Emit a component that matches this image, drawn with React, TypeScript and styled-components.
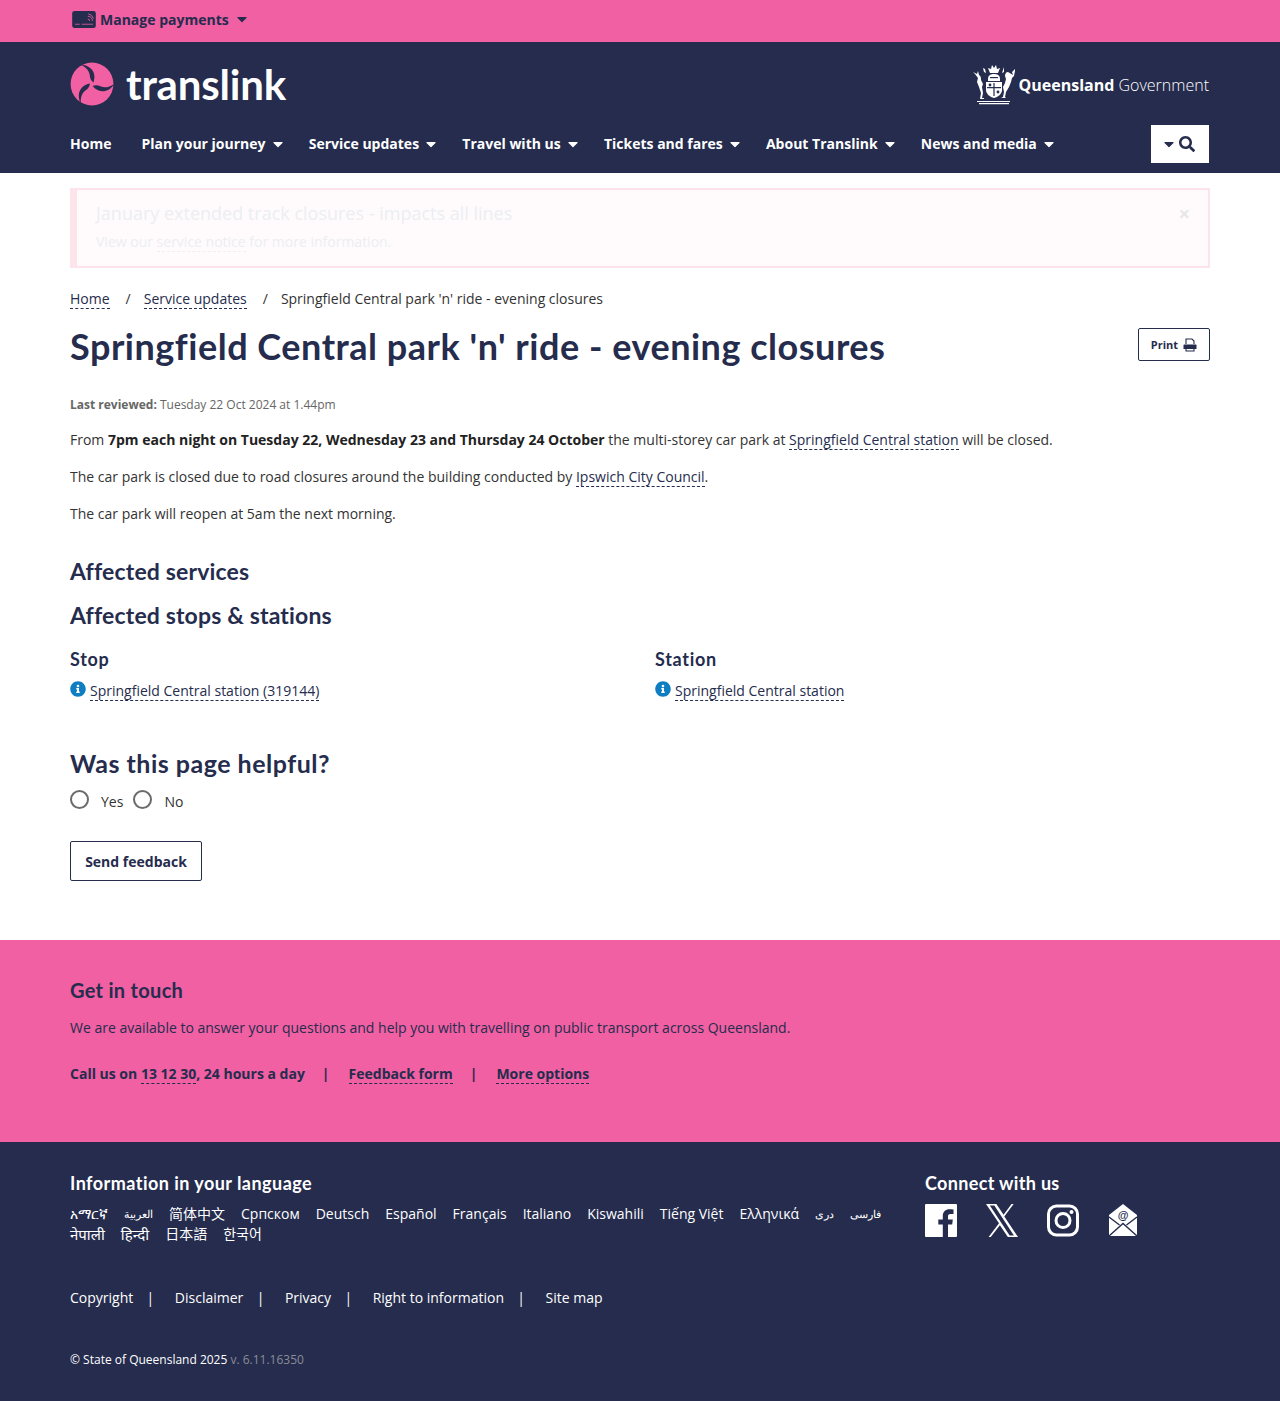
import React from 'react'
import styled, { createGlobalStyle } from 'styled-components'
import { FaCaretDown, FaInfoCircle, FaSearch } from 'react-icons/fa'

const navy = '#252c4d'
const pink = '#f060a3'
const bodyFont = `"Open Sans", "Noto Sans", "Noto Sans CJK SC", sans-serif`
const headFont = `Lato, "Noto Sans", sans-serif`

const GlobalStyle = createGlobalStyle`
  html, body {
    margin: 0;
    padding: 0;
    background: #fff;
    color: #333;
    font-family: ${bodyFont};
    font-size: 14px;
    line-height: 21px;
  }
  * { box-sizing: border-box; }
  h1, h2, h3, p { margin: 0; }
`

const navItems = [
  { label: 'Home', caret: false },
  { label: 'Plan your journey', caret: true },
  { label: 'Service updates', caret: true },
  { label: 'Travel with us', caret: true },
  { label: 'Tickets and fares', caret: true },
  { label: 'About Translink', caret: true },
  { label: 'News and media', caret: true },
]

const languages = [
  { label: 'አማርኛ', size: 14 },
  { label: 'العربية', size: 11 },
  { label: '简体中文', size: 14 },
  { label: 'Српском', size: 14 },
  { label: 'Deutsch', size: 14 },
  { label: 'Español', size: 14 },
  { label: 'Français', size: 14 },
  { label: 'Italiano', size: 14 },
  { label: 'Kiswahili', size: 14 },
  { label: 'Tiếng Việt', size: 14 },
  { label: 'Ελληνικά', size: 14 },
  { label: 'دری', size: 11 },
  { label: 'فارسی', size: 11 },
  { label: 'नेपाली', size: 15 },
  { label: 'हिन्दी', size: 15 },
  { label: '日本語', size: 14 },
  { label: '한국어', size: 14 },
]

const legalLinks = ['Copyright', 'Disclaimer', 'Privacy', 'Right to information', 'Site map']

const CardIcon = () => (
  <svg width="24" height="17" viewBox="0 0 25 18">
    <rect x="0" y="0" width="25" height="18" rx="2.5" fill={navy} />
    <rect x="3" y="13.5" width="5" height="1" fill={pink} opacity="0.8" />
    <rect x="10" y="13.5" width="12" height="1" fill={pink} opacity="0.8" />
    <g fill="none" stroke={pink} strokeWidth="0.9">
      <path d="M16.5 8.5a2 2 0 0 1 2 2" />
      <path d="M16.5 5.5a5 5 0 0 1 5 5" />
      <path d="M17 3a7 7 0 0 1 5.5 5" />
    </g>
  </svg>
)

const blade = 'M-11.5 -19.5C-3.5 -19 5.5 -13.5 1.5 -1.5C-0.5 -3 -2 -5 -2.2 -8.5C-2.5 -13 -6 -17 -11.5 -19.5Z'

const TriskeleLogo = () => (
  <svg width="44" height="44" viewBox="-22 -22 44 44">
    <circle r="21.4" fill={pink} />
    {[0, 120, 240].map((r) => (
      <path key={r} d={blade} fill={navy} transform={`rotate(${r})`} />
    ))}
  </svg>
)

// rough shape of the coat of arms, it only reads at this small size
const CoatOfArms = () => (
  <svg width="44" height="42" viewBox="0 0 44 42" fill="#fff">
    <path d="M1 9l4 2 1-3 1 4c2 1 2 3 2 5l2 4-1 3 1 6-1 5h2v1H8l1-6-2-6-2-5 1-4-3-4z" />
    <path d="M43 6l-3 3 1 3-5-3c-2 0-3 2-3 4l1 3-1 4-2 4 1 5-1 5-2 1h5l-1-1 1-5 3-5 2-5 1-4 2-2 1-5z" />
    <path d="M14 19h16v8c0 4-4 7-8 8-4-1-8-4-8-8z" />
    <path d="M21.4 20h1.2v13h-1.2zM15 24h14v1.2H15z" fill={navy} />
    <circle cx="18" cy="22" r="1.4" fill={navy} />
    <circle cx="26" cy="29" r="1.4" fill={navy} />
    <path d="M16 16c0-4 3-5 6-5s6 1 6 5v2H16z" />
    <path d="M18 14h8v1.2h-8z" fill={navy} />
    <path d="M20 2l2 3 2-3 1 4 3-1-2 5H18l-2-5 3 1z" />
    <path d="M11 5l2 1 1 4-2-1zM32 4l-1 3-1 3 2-1z" />
    <path d="M5 38h33v1H5zM7 40h30v1.2H7z" />
  </svg>
)

const PrintIcon = () => (
  <svg width="14" height="14" viewBox="0 0 14 14">
    <path d="M3 6V1h6l2 2v3M3 11v2h8v-2" fill="none" stroke={navy} strokeWidth="1.1" />
    <path d="M1.5 6.5h11c.6 0 1 .4 1 1V11H.5V7.500c0-.6.4-1 1-1z" fill={navy} />
  </svg>
)

const FacebookIcon = () => (
  <svg width="32" height="33" viewBox="0 0 32 33">
    <path
      d="M1 0h30a1 1 0 0 1 1 1v31a1 1 0 0 1-1 1h-8V20.500h4.200l.6-5H23v-3.200c0-1.500.4-2.400 2.500-2.400H28.500V5.400c-.6-.1-2.200-.2-4-.2-4 0-6.700 2.400-6.700 6.800v3.500h-4.500v5h4.500V33H1a1 1 0 0 1-1-1V1a1 1 0 0 1 1-1z"
      fill="#fff"
    />
  </svg>
)

const XIcon = () => (
  <svg width="32" height="33" viewBox="1.25 2.25 21.3 19.5" preserveAspectRatio="none">
    <path
      d="M18.244 2.25h1.400l-6.200 7.400 9.100 12.100H15.800l-5.300-6.900-6.100 6.900H3l6.900-8.100L1.250 2.250h6.900l4.800 6.300zM17 20.800h2.800L6.800 3.200H3.800z"
      fill="#fff"
    />
  </svg>
)

const InstagramIcon = () => (
  <svg width="32" height="33" viewBox="0 0 32 33" fill="none" stroke="#fff">
    <rect x="1.500" y="2" width="29" height="29" rx="8" strokeWidth="3" />
    <circle cx="16" cy="16.500" r="7" strokeWidth="3" />
    <circle cx="24.500" cy="8" r="2" fill="#fff" stroke="none" />
  </svg>
)

const MailIcon = () => (
  <svg width="30" height="33" viewBox="0 0 30 33">
    <path d="M15 0L29 11V32H1V11Z" fill="#fff" />
    <path d="M1 13L11.500 21M29 13L18.500 21M1 32L15 19.500L29 32" fill="none" stroke={navy} strokeWidth="1.400" />
    <text x="15" y="15" textAnchor="middle" fontSize="11" fontWeight="700" fill={navy} fontFamily="Liberation Sans, sans-serif">@</text>
  </svg>
)

export default function App() {
  return (
    <>
      <GlobalStyle />
      <TopBar>
        <Wrap>
          <ManagePayments>
            <CardIcon />
            Manage payments
            <FaCaretDown size={16} />
          </ManagePayments>
        </Wrap>
      </TopBar>

      <Header>
        <Wrap>
          <BrandRow>
            <Brand>
              <TriskeleLogo />
              <Wordmark>translink</Wordmark>
            </Brand>
            <GovBrand>
              <CoatOfArms />
              <GovName>
                <b>Queensland</b> Government
              </GovName>
            </GovBrand>
          </BrandRow>
          <NavRow>
            <Nav>
              {navItems.map((item) => (
                <NavItem key={item.label}>
                  {item.label}
                  {item.caret && <FaCaretDown size={16} />}
                </NavItem>
              ))}
            </Nav>
            <SearchButton>
              <FaCaretDown size={16} />
              <FaSearch size={16} />
            </SearchButton>
          </NavRow>
        </Wrap>
      </Header>

      <Main>
        <Wrap>
          <Alert>
            <AlertTitle>January extended track closures - impacts all lines</AlertTitle>
            <AlertText>
              View our <DashedLink>service notice</DashedLink> for more information.
            </AlertText>
            <AlertClose>×</AlertClose>
          </Alert>

          <Breadcrumb>
            <NavyLink>Home</NavyLink>
            <Slash>/</Slash>
            <NavyLink>Service updates</NavyLink>
            <Slash>/</Slash>
            <span>Springfield Central park 'n' ride - evening closures</span>
          </Breadcrumb>

          <TitleRow>
            <PageTitle>Springfield Central park 'n' ride - evening closures</PageTitle>
            <PrintButton>
              Print <PrintIcon />
            </PrintButton>
          </TitleRow>

          <Reviewed>
            <b>Last reviewed:</b> Tuesday 22 Oct 2024 at 1.44pm
          </Reviewed>

          <Para>
            From <b>7pm each night on Tuesday 22, Wednesday 23 and Thursday 24 October</b> the multi-storey car park at{' '}
            <NavyLink>Springfield Central station</NavyLink> will be closed.
          </Para>
          <Para>
            The car park is closed due to road closures around the building conducted by{' '}
            <NavyLink>Ipswich City Council</NavyLink>.
          </Para>
          <Para>The car park will reopen at 5am the next morning.</Para>

          <SectionTitle>Affected services</SectionTitle>
          <SectionTitleTight>Affected stops &amp; stations</SectionTitleTight>

          <StopsGrid>
            <div>
              <ColumnTitle>Stop</ColumnTitle>
              <StopLine>
                <InfoIcon size={16} />
                <span>
                  <NavyLink>Springfield Central station (319144)</NavyLink>
                </span>
              </StopLine>
            </div>
            <div>
              <ColumnTitle>Station</ColumnTitle>
              <StopLine>
                <InfoIcon size={16} />
                <span>
                  <NavyLink>Springfield Central station</NavyLink>
                </span>
              </StopLine>
            </div>
          </StopsGrid>

          <HelpfulTitle>Was this page helpful?</HelpfulTitle>
          <RadioRow>
            <Radio type="radio" name="helpful" />
            <RadioLabel>Yes</RadioLabel>
            <Radio type="radio" name="helpful" />
            <RadioLabel>No</RadioLabel>
          </RadioRow>
          <FeedbackButton>Send feedback</FeedbackButton>
        </Wrap>
      </Main>

      <Contact>
        <Wrap>
          <ContactTitle>Get in touch</ContactTitle>
          <ContactText>We are available to answer your questions and help you with travelling on public transport across Queensland.</ContactText>
          <ContactLinks>
            Call us on <DashedLink>13 12 30</DashedLink>, 24 hours a day
            <Pipe>|</Pipe>
            <DashedLink>Feedback form</DashedLink>
            <Pipe>|</Pipe>
            <DashedLink>More options</DashedLink>
          </ContactLinks>
        </Wrap>
      </Contact>

      <Footer>
        <Wrap>
          <FooterTop>
            <LanguageColumn>
              <FooterTitle>Information in your language</FooterTitle>
              <Languages>
                {languages.map((l) => (
                  <Language key={l.label} $size={l.size}>
                    {l.label}
                  </Language>
                ))}
              </Languages>
            </LanguageColumn>
            <div>
              <ConnectTitle>Connect with us</ConnectTitle>
              <Social>
                <FacebookIcon />
                <XIcon />
                <InstagramIcon />
                <MailIcon />
              </Social>
            </div>
          </FooterTop>
          <LegalRow>
            {legalLinks.map((l, i) => (
              <LegalItem key={l} $last={i === legalLinks.length - 1}>
                {l}
              </LegalItem>
            ))}
          </LegalRow>
          <Copyright>
            © State of Queensland 2025 <Version>v. 6.11.16350</Version>
          </Copyright>
        </Wrap>
      </Footer>
    </>
  )
}

const Wrap = styled.div`
  width: 1140px;
  margin: 0 auto;
`

const TopBar = styled.div`
  height: 42px;
  background: ${pink};
`

const ManagePayments = styled.div`
  display: flex;
  align-items: center;
  height: 38px;
  padding-left: 2px;
  font-weight: 700;
  color: ${navy};
  svg:first-child {
    margin-right: 4px;
  }
  svg:last-child {
    margin-left: 5px;
  }
`

const Header = styled.header`
  height: 131px;
  background: ${navy};
  color: #fff;
`

const BrandRow = styled.div`
  display: flex;
  justify-content: space-between;
  align-items: center;
  height: 83px;
`

const Brand = styled.div`
  display: flex;
  align-items: center;
  gap: 12px;
`

const Wordmark = styled.span`
  font-family: ${headFont};
  font-weight: 700;
  font-size: 42px;
  line-height: 44px;
  letter-spacing: -0.2px;
`

const GovBrand = styled.div`
  display: flex;
  align-items: center;
  gap: 3px;
  margin-right: 1px;
`

const GovName = styled.span`
  padding-top: 4px;
  font-size: 16px;
  font-weight: 300;
  font-stretch: 96%;
  b {
    font-weight: 700;
    font-stretch: 97%;
  }
`

const NavRow = styled.div`
  display: flex;
  justify-content: space-between;
  align-items: flex-start;
`

const Nav = styled.nav`
  display: flex;
  gap: 30px;
  padding-top: 8px;
`

const NavItem = styled.div`
  display: flex;
  align-items: center;
  gap: 4px;
  font-weight: 700;
  color: #fff;
  height: 21px;
  svg {
    margin-right: -6.8px;
  }
`

const SearchButton = styled.div`
  display: flex;
  align-items: center;
  justify-content: center;
  gap: 2px;
  width: 58px;
  height: 38px;
  margin-right: 1px;
  padding-right: 4px;
  background: #fff;
  color: ${navy};
`

const Main = styled.main`
  height: 767px;
  padding-top: 15px;
`

const Alert = styled.div`
  position: relative;
  height: 80px;
  padding: 11px 20px 0 19px;
  background: #fffbfc;
  border: 2px solid #fde3ea;
  border-left-width: 7px;
`

const AlertTitle = styled.div`
  font-size: 18px;
  line-height: 24px;
  color: #eceef2;
`

const AlertText = styled.div`
  margin-top: 6px;
  color: #eceef2;
`

const AlertClose = styled.span`
  position: absolute;
  top: 12px;
  right: 18px;
  font-size: 20px;
  font-weight: 700;
  line-height: 24px;
  color: #e6e7ea;
`

const DashedLink = styled.span`
  border-bottom: 1px dashed currentColor;
`

const NavyLink = styled(DashedLink)`
  color: ${navy};
`

const Breadcrumb = styled.div`
  margin-top: 20px;
  height: 21px;
`

const Slash = styled.span`
  margin: 0 13px 0 16px;
`

const TitleRow = styled.div`
  display: flex;
  justify-content: space-between;
  align-items: flex-start;
  margin-top: 15px;
`

const PageTitle = styled.h1`
  font-family: ${headFont};
  font-weight: 700;
  font-size: 36px;
  line-height: 44px;
  letter-spacing: 0.52px;
  color: ${navy};
`

const PrintButton = styled.div`
  display: flex;
  align-items: center;
  gap: 5px;
  height: 33px;
  margin-top: 4px;
  padding: 0 12px;
  border: 1px solid ${navy};
  border-radius: 2px;
  font-size: 11px;
  font-weight: 700;
  color: ${navy};
`

const Reviewed = styled.div`
  margin-top: 28px;
  font-size: 12px;
  line-height: 18px;
  color: #666;
`

const Para = styled.p`
  margin-top: 16px;
  &:first-of-type {
    margin-top: 15px;
  }
  b {
    color: #222;
  }
`

const SectionTitle = styled.h2`
  margin-top: 32px;
  font-family: ${headFont};
  font-weight: 700;
  font-size: 23px;
  line-height: 30px;
  letter-spacing: 0.15px;
  color: ${navy};
`

const SectionTitleTight = styled(SectionTitle)`
  margin-top: 14px;
`

const StopsGrid = styled.div`
  display: grid;
  grid-template-columns: 585px 1fr;
  margin-top: 16px;
`

const ColumnTitle = styled.h3`
  font-family: ${headFont};
  font-weight: 700;
  font-size: 18px;
  line-height: 26px;
  letter-spacing: 0.7px;
  color: ${navy};
`

const StopLine = styled.div`
  display: flex;
  align-items: flex-start;
  gap: 4px;
  margin-top: 8px;
`

const InfoIcon = styled(FaInfoCircle)`
  color: #0f7dc2;
  margin-top: 1px;
`

const HelpfulTitle = styled.h2`
  margin-top: 46px;
  font-family: ${headFont};
  font-weight: 700;
  font-size: 25px;
  line-height: 32px;
  letter-spacing: 0.5px;
  color: ${navy};
`

const RadioRow = styled.div`
  display: flex;
  align-items: center;
  margin-top: 11px;
  height: 21px;
`

const Radio = styled.input`
  appearance: none;
  width: 19px;
  height: 19px;
  margin: 0 12px 3px 0;
  border: 2px solid #6b6b6b;
  border-radius: 50%;
  background: #fff;
`

const RadioLabel = styled.label`
  margin-right: 10px;
  padding-top: 2px;
`

const FeedbackButton = styled.div`
  display: flex;
  align-items: center;
  justify-content: center;
  width: 132px;
  height: 40px;
  margin-top: 30px;
  border: 1px solid ${navy};
  border-radius: 2px;
  font-weight: 700;
  color: ${navy};
`

const Contact = styled.section`
  height: 202px;
  padding-top: 35px;
  background: ${pink};
  color: ${navy};
`

const ContactTitle = styled.h2`
  font-family: ${headFont};
  font-weight: 700;
  font-size: 20px;
  line-height: 30px;
  letter-spacing: 0.3px;
`

const ContactText = styled.p`
  margin-top: 12px;
`

const ContactLinks = styled.div`
  margin-top: 25px;
  font-weight: 700;
`

const Pipe = styled.span`
  margin: 0 19px 0 17px;
`

const Footer = styled.footer`
  height: 259px;
  padding-top: 28px;
  background: ${navy};
  color: #fff;
`

const FooterTop = styled.div`
  display: flex;
`

const LanguageColumn = styled.div`
  width: 855px;
`

const FooterTitle = styled.h3`
  font-family: ${headFont};
  font-weight: 700;
  font-size: 18px;
  line-height: 26px;
  letter-spacing: 0.46px;
`

const ConnectTitle = styled(FooterTitle)`
  letter-spacing: 0.33px;
`

const Languages = styled.div`
  display: flex;
  flex-wrap: wrap;
  column-gap: 16px;
  width: 830px;
  margin-top: 8px;
`

const Language = styled.span<{ $size: number }>`
  font-size: ${(p) => p.$size}px;
  line-height: 20px;
`

const Social = styled.div`
  display: flex;
  align-items: center;
  gap: 29px;
  margin-top: 8px;
`

const LegalRow = styled.div`
  display: flex;
  margin-top: 43px;
`

const LegalItem = styled.span<{ $last: boolean }>`
  margin-right: ${(p) => (p.$last ? 0 : 21.6)}px;
  padding-right: ${(p) => (p.$last ? 0 : 20)}px;
  position: relative;
  &::after {
    content: ${(p) => (p.$last ? 'none' : "'|'")};
    position: absolute;
    right: -1px;
  }
`

const Copyright = styled.div`
  margin-top: 41px;
  font-size: 12px;
`

const Version = styled.span`
  color: #8a8c98;
`
